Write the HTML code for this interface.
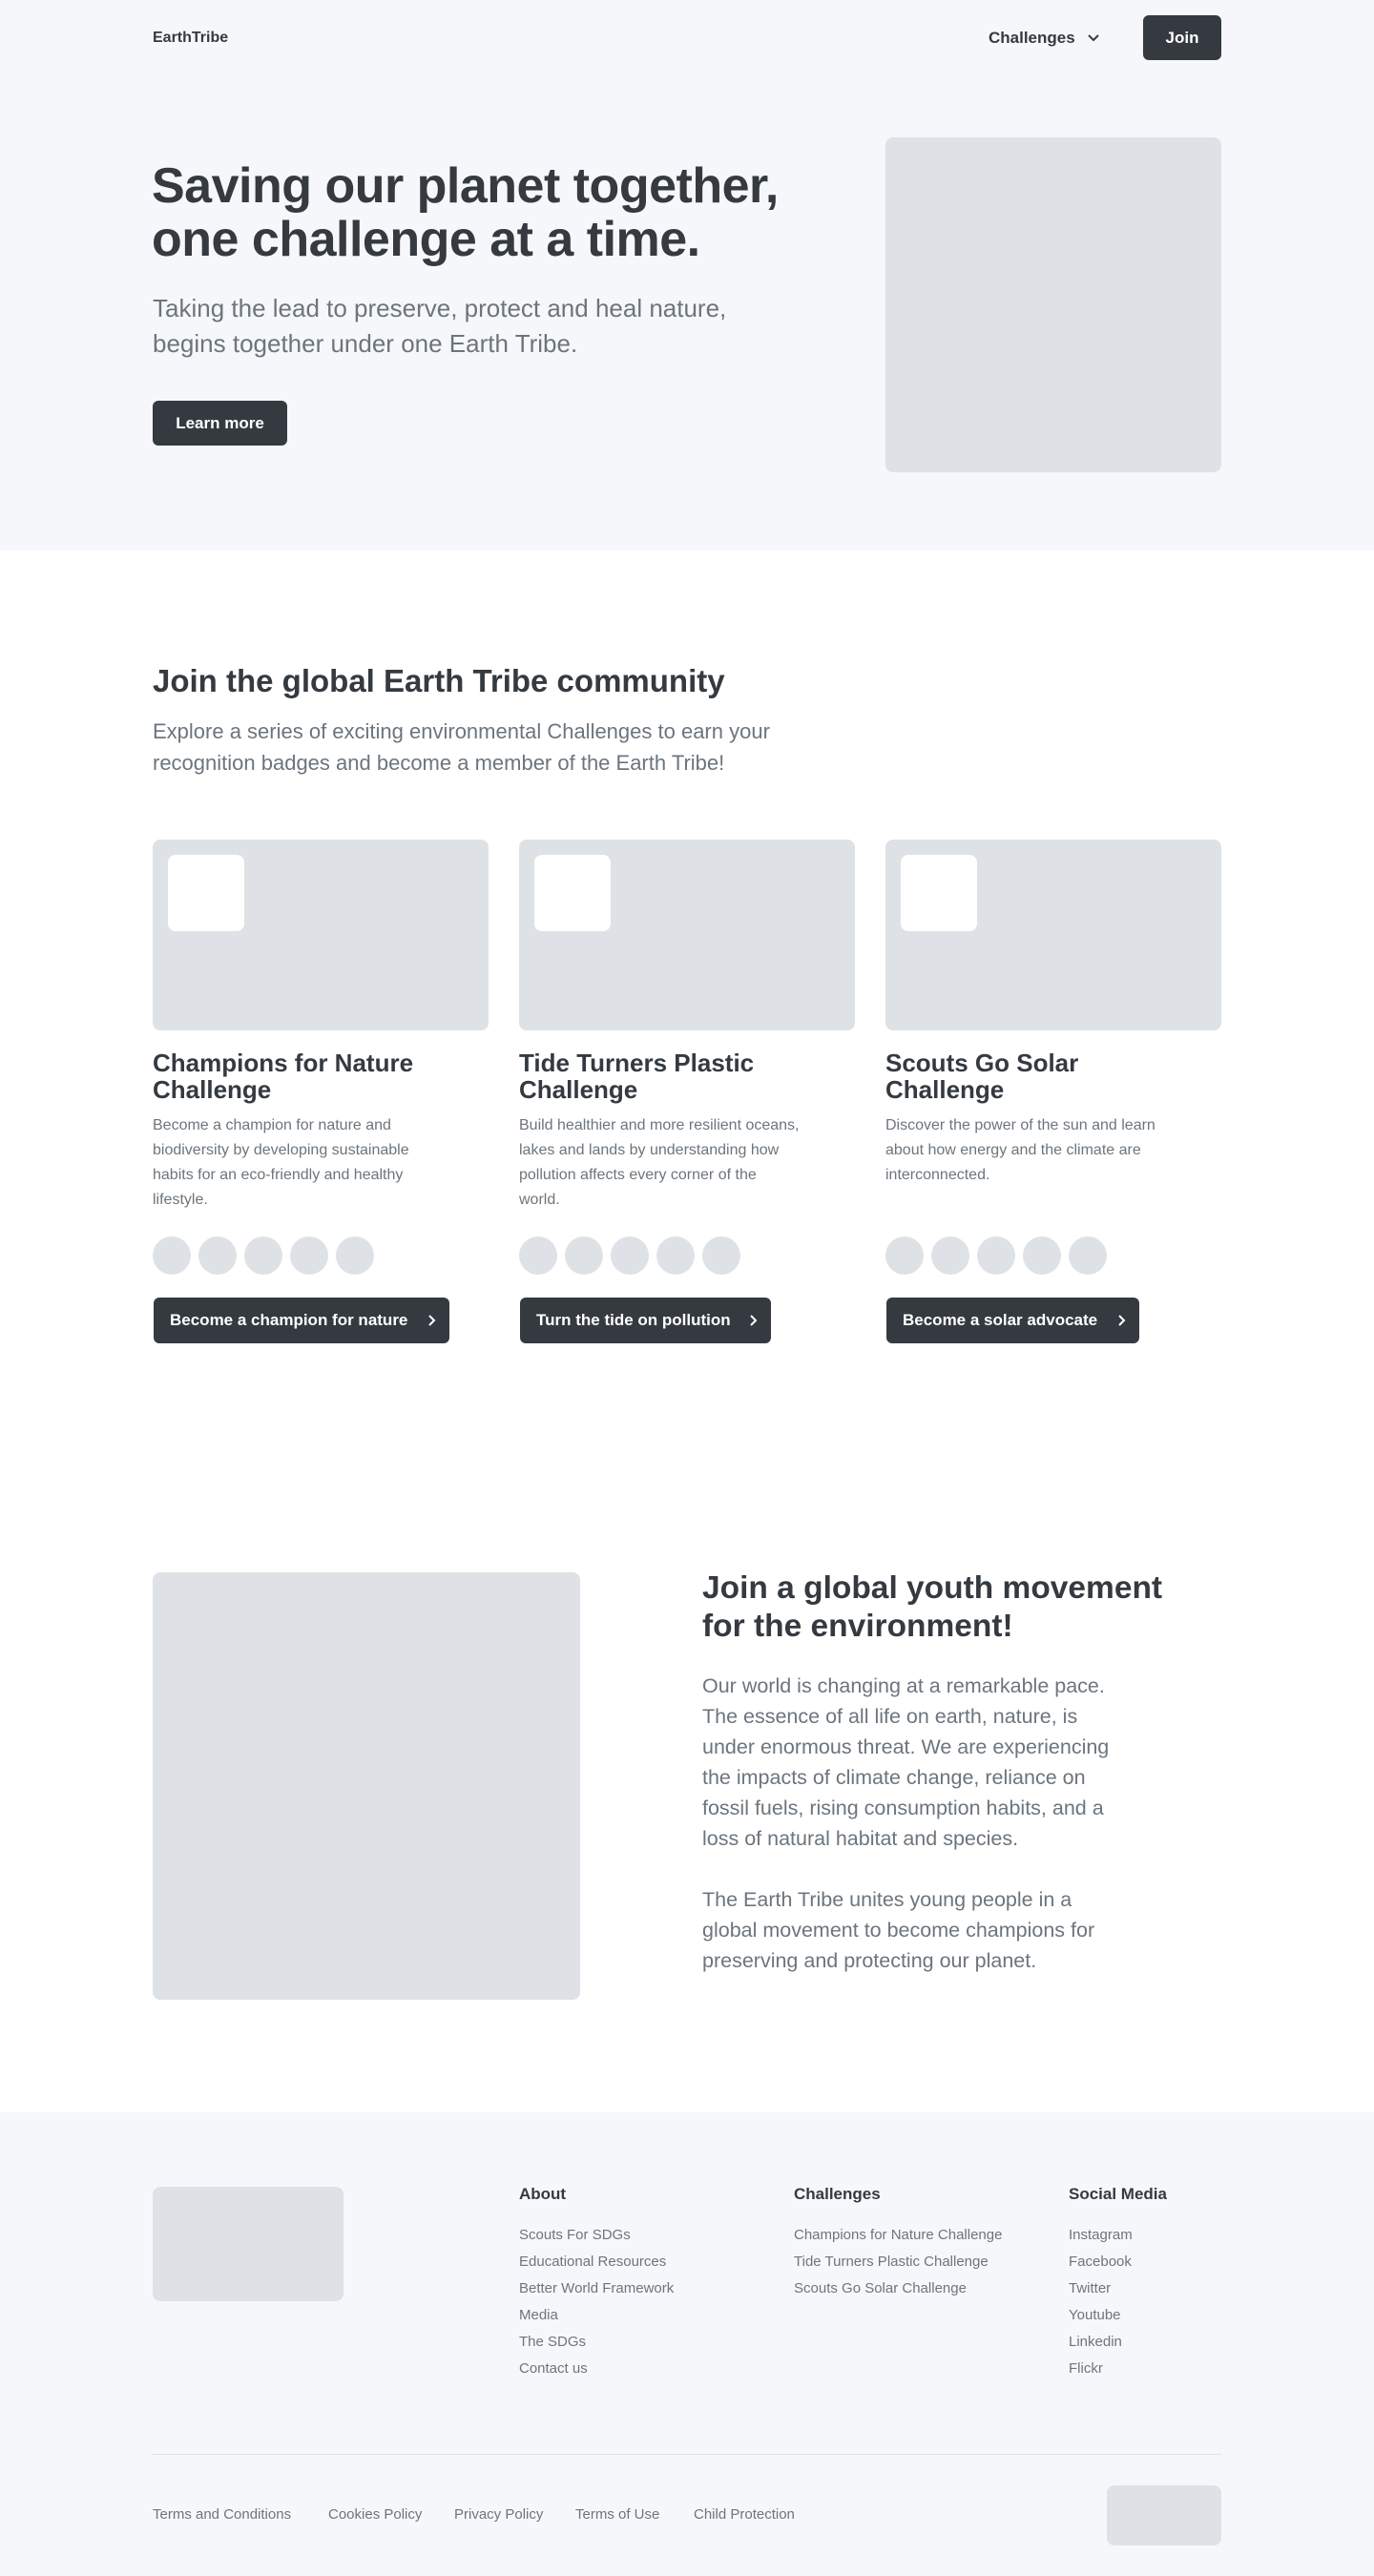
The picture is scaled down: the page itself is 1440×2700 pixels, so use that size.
<!DOCTYPE html>
<html><head><meta charset="utf-8"><style>
*{margin:0;padding:0;box-sizing:border-box}
body{width:1440px;height:2700px;position:relative;background:#fff;font-family:"Liberation Sans",sans-serif;color:#343a40;overflow:hidden}
.a{position:absolute;white-space:nowrap}
.ph{position:absolute;background:#dee2e6;border-radius:8px}
.btn{position:absolute;background:#343a40;color:#fff;border-radius:6px;font-weight:bold;font-size:17px;display:flex;align-items:center;padding-left:17px}
.g{color:#6c757d}
.circ{position:absolute;width:40px;height:40px;border-radius:50%;background:#dee2e6}
.fl{font-size:15px;color:#6c757d;line-height:28px}
.fh{font-size:17px;font-weight:bold}
</style></head><body>
<div style="position:absolute;left:0;top:0;width:1440px;height:577px;background:#f6f7fa"></div>
<div class="a" style="left:160px;top:31px;font-size:16px;font-weight:bold;color:#343a40">EarthTribe</div>
<div class="a" style="left:1036px;top:30px;font-size:17px;font-weight:bold">Challenges</div>
<svg class="a" style="left:1138px;top:32px" width="16" height="16" viewBox="0 0 16 16"><path d="M3 5l5 5 5-5" fill="none" stroke="#343a40" stroke-width="2"/></svg>
<div class="btn" style="left:1198px;top:16px;width:82px;height:47px;justify-content:center;padding:0">Join</div>
<div class="a" style="left:159px;top:167px;font-size:52px;font-weight:bold;line-height:56px;letter-spacing:-0.5px">Saving our planet together,<br>one challenge at a time.</div>
<div class="a g" style="left:160px;top:305px;font-size:26px;line-height:37px">Taking the lead to preserve, protect and heal nature,<br>begins together under one Earth Tribe.</div>
<div class="btn" style="left:160px;top:420px;width:141px;height:47px;justify-content:center;padding:0">Learn more</div>
<div class="ph" style="left:928px;top:144px;width:352px;height:351px"></div>

<div class="a" style="left:160px;top:695px;font-size:33px;font-weight:bold">Join the global Earth Tribe community</div>
<div class="a g" style="left:160px;top:750px;font-size:22px;line-height:33px">Explore a series of exciting environmental Challenges to earn your<br>recognition badges and become a member of the Earth Tribe!</div>

<div class="ph" style="left:160px;top:880px;width:352px;height:200px"></div>
<div class="ph" style="left:544px;top:880px;width:352px;height:200px"></div>
<div class="ph" style="left:928px;top:880px;width:352px;height:200px"></div>
<div class="a" style="left:176px;top:896px;width:80px;height:80px;background:#fff;border-radius:8px"></div>
<div class="a" style="left:560px;top:896px;width:80px;height:80px;background:#fff;border-radius:8px"></div>
<div class="a" style="left:944px;top:896px;width:80px;height:80px;background:#fff;border-radius:8px"></div>

<div class="a" style="left:160px;top:1100px;font-size:26px;line-height:28px;font-weight:bold">Champions for Nature<br>Challenge</div>
<div class="a" style="left:544px;top:1100px;font-size:26px;line-height:28px;font-weight:bold">Tide Turners Plastic<br>Challenge</div>
<div class="a" style="left:928px;top:1100px;font-size:26px;line-height:28px;font-weight:bold">Scouts Go Solar<br>Challenge</div>
<div class="a g" style="left:160px;top:1167px;font-size:16px;line-height:26px">Become a champion for nature and<br>biodiversity by developing sustainable<br>habits for an eco-friendly and healthy<br>lifestyle.</div>
<div class="a g" style="left:544px;top:1167px;font-size:16px;line-height:26px">Build healthier and more resilient oceans,<br>lakes and lands by understanding how<br>pollution affects every corner of the<br>world.</div>
<div class="a g" style="left:928px;top:1167px;font-size:16px;line-height:26px">Discover the power of the sun and learn<br>about how energy and the climate are<br>interconnected.</div>

<div class="circ" style="left:160px;top:1296px"></div><div class="circ" style="left:208px;top:1296px"></div><div class="circ" style="left:256px;top:1296px"></div><div class="circ" style="left:304px;top:1296px"></div><div class="circ" style="left:352px;top:1296px"></div>
<div class="circ" style="left:544px;top:1296px"></div><div class="circ" style="left:592px;top:1296px"></div><div class="circ" style="left:640px;top:1296px"></div><div class="circ" style="left:688px;top:1296px"></div><div class="circ" style="left:736px;top:1296px"></div>
<div class="circ" style="left:928px;top:1296px"></div><div class="circ" style="left:976px;top:1296px"></div><div class="circ" style="left:1024px;top:1296px"></div><div class="circ" style="left:1072px;top:1296px"></div><div class="circ" style="left:1120px;top:1296px"></div>

<div class="btn" style="left:161px;top:1360px;width:310px;height:48px">Become a champion for nature<svg style="position:absolute;right:14px;top:17px" width="10" height="14" viewBox="0 0 10 14"><path d="M3 2l5 5-5 5" fill="none" stroke="#fff" stroke-width="2"/></svg></div>
<div class="btn" style="left:545px;top:1360px;width:263px;height:48px">Turn the tide on pollution<svg style="position:absolute;right:14px;top:17px" width="10" height="14" viewBox="0 0 10 14"><path d="M3 2l5 5-5 5" fill="none" stroke="#fff" stroke-width="2"/></svg></div>
<div class="btn" style="left:929px;top:1360px;width:265px;height:48px">Become a solar advocate<svg style="position:absolute;right:14px;top:17px" width="10" height="14" viewBox="0 0 10 14"><path d="M3 2l5 5-5 5" fill="none" stroke="#fff" stroke-width="2"/></svg></div>

<div class="ph" style="left:160px;top:1648px;width:448px;height:448px"></div>
<div class="a" style="left:736px;top:1645px;font-size:33.5px;line-height:40px;font-weight:bold">Join a global youth movement<br>for the environment!</div>
<div class="a g" style="left:736px;top:1751px;font-size:21.5px;line-height:32px">Our world is changing at a remarkable pace.<br>The essence of all life on earth, nature, is<br>under enormous threat. We are experiencing<br>the impacts of climate change, reliance on<br>fossil fuels, rising consumption habits, and a<br>loss of natural habitat and species.<br><br>The Earth Tribe unites young people in a<br>global movement to become champions for<br>preserving and protecting our planet.</div>

<div style="position:absolute;left:0;top:2214px;width:1440px;height:486px;background:#f6f7fa"></div>
<div class="ph" style="left:160px;top:2292px;width:200px;height:120px"></div>
<div class="a fh" style="left:544px;top:2290px">About</div>
<div class="a fh" style="left:832px;top:2290px">Challenges</div>
<div class="a fh" style="left:1120px;top:2290px">Social Media</div>
<div class="a fl" style="left:544px;top:2329px">Scouts For SDGs<br>Educational Resources<br>Better World Framework<br>Media<br>The SDGs<br>Contact us</div>
<div class="a fl" style="left:832px;top:2329px">Champions for Nature Challenge<br>Tide Turners Plastic Challenge<br>Scouts Go Solar Challenge</div>
<div class="a fl" style="left:1120px;top:2329px">Instagram<br>Facebook<br>Twitter<br>Youtube<br>Linkedin<br>Flickr</div>
<div style="position:absolute;left:160px;top:2572px;width:1120px;height:1px;background:#dee2e6"></div>
<div class="a fl" style="left:160px;top:2622px">Terms and Conditions</div>
<div class="a fl" style="left:344px;top:2622px">Cookies Policy</div>
<div class="a fl" style="left:476px;top:2622px">Privacy Policy</div>
<div class="a fl" style="left:603px;top:2622px">Terms of Use</div>
<div class="a fl" style="left:727px;top:2622px">Child Protection</div>
<div class="ph" style="left:1160px;top:2605px;width:120px;height:63px"></div>
</body></html>
